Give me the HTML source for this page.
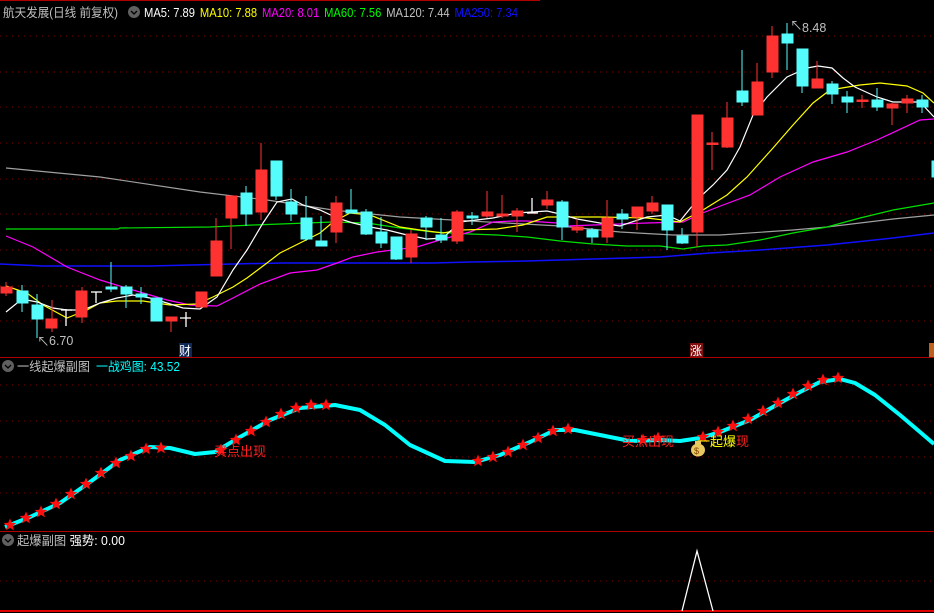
<!DOCTYPE html>
<html><head><meta charset="utf-8"><style>
body{margin:0;background:#000;width:934px;height:613px;overflow:hidden}
svg{display:block}
text{font-family:"Liberation Sans","Noto Sans CJK SC",sans-serif;font-size:12.5px}
</style></head><body>
<svg width="934" height="613" viewBox="0 0 934 613" xmlns="http://www.w3.org/2000/svg">
<rect width="934" height="613" fill="#000"/>
<line x1="0" y1="0.5" x2="540" y2="0.5" stroke="#b00000"/>
<g stroke="#800000" stroke-dasharray="1,5" stroke-width="1">
<line x1="0" y1="36" x2="934" y2="36"/><line x1="0" y1="72" x2="934" y2="72"/><line x1="0" y1="107" x2="934" y2="107"/><line x1="0" y1="143" x2="934" y2="143"/><line x1="0" y1="179" x2="934" y2="179"/><line x1="0" y1="214" x2="934" y2="214"/><line x1="0" y1="250" x2="934" y2="250"/><line x1="0" y1="286" x2="934" y2="286"/><line x1="0" y1="321" x2="934" y2="321"/>
<line x1="0" y1="385" x2="934" y2="385"/><line x1="0" y1="421" x2="934" y2="421"/><line x1="0" y1="457" x2="934" y2="457"/><line x1="0" y1="493" x2="934" y2="493"/>
<line x1="0" y1="581" x2="934" y2="581"/>
</g>
<line x1="0" y1="357.5" x2="934" y2="357.5" stroke="#b00000"/>
<line x1="0" y1="531.5" x2="934" y2="531.5" stroke="#b00000"/>
<line x1="0" y1="611" x2="934" y2="611" stroke="#e00000" stroke-width="2"/>

<!-- MA lines -->
<g fill="none" stroke-width="1.2">
<polyline stroke="#a0a0a0" points="6,168 100,177 200,192 267,200 333,210 400,217 470,221 560,226 620,232 673,235 720,235 793,230 827,227 893,219 934,215"/>
<polyline stroke="#1010ff" stroke-width="1.5" points="0,264 43,266 150,266 233,264 283,263 433,263 470,262 527,261 593,259 660,257 710,253 760,250 827,245 893,238 934,233"/>
<polyline stroke="#00e000" points="6,229 118,229 120,228 210,227 253,225 333,222 367,223 400,228 433,232 470,234 497,235 527,237 560,241 593,244 627,246 660,246 683,249 703,246 727,245 760,240 793,233 827,227 860,218 893,210 934,203"/>
<polyline stroke="#ff00ff" points="6,236 33,247 67,267 100,280 133,290 167,300 190,305 217,306 233,298 260,284 290,273 317,270 337,263 353,257 377,252 417,247 443,239 470,232 493,222 513,221 527,221 557,223 567,226 647,223 683,222 700,214 723,205 750,195 780,177 813,162 847,152 877,140 920,120 934,119"/>
<polyline stroke="#ffff00" points="6,286 27,293 43,305 67,318 87,310 100,303 117,301 143,301 170,305 197,304 213,297 233,287 247,278 267,263 280,253 300,243 320,233 333,222 350,213 370,215 400,227 420,230 443,233 460,230 497,229 523,225 547,217 600,217 647,218 680,222 703,210 727,195 747,177 773,148 793,125 813,103 830,90 860,85 880,83 907,86 923,93 934,103"/>
<polyline stroke="#ffffff" points="6,312 22,299 37,302 53,308 67,310 83,310 100,303 117,298 133,295 150,298 167,303 183,308 200,309 217,297 233,270 247,250 263,223 277,202 292,199 303,205 320,210 337,218 353,223 370,227 387,230 407,235 427,239 443,238 460,222 493,218 517,213 547,211 560,214 577,219 600,223 620,226 647,217 667,215 680,221 693,205 700,197 713,185 727,170 740,147 753,115 767,97 787,77 807,68 818,66 832,68 843,78 855,87 877,97 893,102 920,102 934,117"/>
</g>

<!-- red candles -->
<g stroke="#ff3232" fill="#ff3232">
<line x1="6" y1="282" x2="6" y2="296"/><rect x="1" y="287" width="11" height="6"/>
<line x1="52" y1="300" x2="52" y2="332"/><rect x="46" y="319" width="11" height="9"/>
<line x1="82" y1="287" x2="82" y2="323"/><rect x="76" y="291" width="11" height="26"/>
<line x1="171" y1="317" x2="171" y2="332"/><rect x="166" y="317" width="11" height="4"/>
<line x1="201" y1="292" x2="201" y2="307"/><rect x="196" y="292" width="11" height="15"/>
<line x1="216" y1="218" x2="216" y2="276"/><rect x="211" y="241" width="11" height="35"/>
<line x1="231" y1="196" x2="231" y2="249"/><rect x="226" y="196" width="11" height="22"/>
<line x1="261" y1="143" x2="261" y2="220"/><rect x="256" y="170" width="11" height="42"/>
<line x1="336" y1="196" x2="336" y2="243"/><rect x="331" y="203" width="11" height="29"/>
<line x1="411" y1="230" x2="411" y2="263"/><rect x="406" y="234" width="11" height="23"/>
<line x1="457" y1="210" x2="457" y2="244"/><rect x="452" y="212" width="11" height="29"/>
<line x1="487" y1="191" x2="487" y2="218"/><rect x="482" y="212" width="11" height="4"/>
<line x1="502" y1="195" x2="502" y2="218"/><rect x="497" y="214" width="11" height="2"/>
<line x1="517" y1="208" x2="517" y2="232"/><rect x="512" y="211" width="11" height="5"/>
<line x1="547" y1="191" x2="547" y2="209"/><rect x="542" y="200" width="11" height="5"/>
<line x1="577" y1="219" x2="577" y2="233"/><rect x="572" y="227" width="11" height="3"/>
<line x1="607" y1="200" x2="607" y2="243"/><rect x="602" y="218" width="11" height="19"/>
<line x1="637" y1="207" x2="637" y2="230"/><rect x="632" y="207" width="11" height="10"/>
<line x1="652" y1="196" x2="652" y2="214"/><rect x="647" y="203" width="11" height="8"/>
<line x1="697" y1="115" x2="697" y2="247"/><rect x="692" y="115" width="11" height="117"/>
<line x1="712" y1="132" x2="712" y2="170"/><rect x="707" y="143" width="11" height="1.5"/>
<line x1="727" y1="102" x2="727" y2="148"/><rect x="722" y="118" width="11" height="29"/>
<line x1="757" y1="63" x2="757" y2="115"/><rect x="752" y="82" width="11" height="33"/>
<line x1="772" y1="26" x2="772" y2="78"/><rect x="767" y="36" width="11" height="36"/>
<line x1="817" y1="61" x2="817" y2="88"/><rect x="812" y="79" width="11" height="9"/>
<line x1="862" y1="95" x2="862" y2="108"/><rect x="857" y="100" width="11" height="1.5"/>
<line x1="892" y1="103" x2="892" y2="125"/><rect x="887" y="104" width="11" height="4"/>
<line x1="907" y1="95" x2="907" y2="113"/><rect x="902" y="99" width="11" height="4"/>
</g>
<!-- cyan candles -->
<g stroke="#54fcfc" fill="#54fcfc">
<line x1="22" y1="285" x2="22" y2="312"/><rect x="17" y="291" width="11" height="12"/>
<line x1="37" y1="294" x2="37" y2="338"/><rect x="32" y="305" width="11" height="14"/>
<line x1="111" y1="262" x2="111" y2="292"/><rect x="106" y="287" width="11" height="2"/>
<line x1="126" y1="285" x2="126" y2="308"/><rect x="121" y="287" width="11" height="7"/>
<line x1="141" y1="287" x2="141" y2="304"/><rect x="136" y="294" width="11" height="3"/>
<line x1="156" y1="298" x2="156" y2="321"/><rect x="151" y="298" width="11" height="23"/>
<line x1="246" y1="186" x2="246" y2="226"/><rect x="241" y="193" width="11" height="21"/>
<line x1="276" y1="161" x2="276" y2="200"/><rect x="271" y="161" width="11" height="35"/>
<line x1="291" y1="189" x2="291" y2="221"/><rect x="286" y="202" width="11" height="12"/>
<line x1="306" y1="196" x2="306" y2="241"/><rect x="301" y="218" width="11" height="21"/>
<line x1="321" y1="216" x2="321" y2="246"/><rect x="316" y="241" width="11" height="5"/>
<line x1="351" y1="189" x2="351" y2="213"/><rect x="346" y="210" width="11" height="3"/>
<line x1="366" y1="209" x2="366" y2="235"/><rect x="361" y="212" width="11" height="22"/>
<line x1="381" y1="217" x2="381" y2="248"/><rect x="376" y="232" width="11" height="11"/>
<line x1="396" y1="237" x2="396" y2="260"/><rect x="391" y="237" width="11" height="22"/>
<line x1="426" y1="216" x2="426" y2="240"/><rect x="421" y="218" width="11" height="9"/>
<line x1="441" y1="218" x2="441" y2="243"/><rect x="436" y="235" width="11" height="5"/>
<line x1="472" y1="212" x2="472" y2="225"/><rect x="467" y="216" width="11" height="2"/>
<line x1="562" y1="200" x2="562" y2="240"/><rect x="557" y="202" width="11" height="25"/>
<line x1="592" y1="228" x2="592" y2="243"/><rect x="587" y="230" width="11" height="7"/>
<line x1="622" y1="209" x2="622" y2="229"/><rect x="617" y="214" width="11" height="5"/>
<line x1="667" y1="205" x2="667" y2="250"/><rect x="662" y="205" width="11" height="25"/>
<line x1="682" y1="228" x2="682" y2="244"/><rect x="677" y="236" width="11" height="7"/>
<line x1="742" y1="50" x2="742" y2="106"/><rect x="737" y="91" width="11" height="11"/>
<line x1="787" y1="23" x2="787" y2="70"/><rect x="782" y="34" width="11" height="9"/>
<line x1="802" y1="49" x2="802" y2="93"/><rect x="797" y="49" width="11" height="37"/>
<line x1="832" y1="81" x2="832" y2="104"/><rect x="827" y="84" width="11" height="10"/>
<line x1="847" y1="91" x2="847" y2="113"/><rect x="842" y="97" width="11" height="5"/>
<line x1="877" y1="88" x2="877" y2="111"/><rect x="872" y="100" width="11" height="7"/>
<line x1="922" y1="95" x2="922" y2="113"/><rect x="917" y="100" width="11" height="7"/>
<rect x="932" y="161" width="3" height="16"/>
</g>
<!-- white crosses -->
<g stroke="#ffffff" stroke-width="1.3">
<line x1="61" y1="310" x2="72" y2="310"/><line x1="66" y1="309" x2="66" y2="326"/>
<line x1="91" y1="292" x2="102" y2="292"/><line x1="96" y1="292" x2="96" y2="303"/>
<line x1="180" y1="318" x2="191" y2="318"/><line x1="186" y1="312" x2="186" y2="327"/>
<line x1="527" y1="213" x2="538" y2="213"/><line x1="532" y1="198" x2="532" y2="213"/>
</g>
<text x="37" y="346" fill="#c0c0c0" font-size="11">↖</text>
<text x="49" y="345" fill="#c0c0c0" style="font-size:12.5px">6.70</text>
<text x="790" y="30" fill="#c0c0c0" font-size="11">↖</text>
<text x="802" y="32" fill="#c0c0c0" style="font-size:12.5px">8.48</text>
<rect x="179" y="343" width="13" height="14" fill="#102858"/>
<text x="179" y="355" fill="#fff" style="font-size:12px">财</text>
<rect x="690" y="343" width="13" height="14" fill="#801010"/>
<text x="690" y="355" fill="#fff" style="font-size:12px">涨</text>
<rect x="929" y="343" width="5" height="14" fill="#c06020"/>

<!-- header -->
<text x="3" y="17" fill="#c0c0c0" style="font-size:12.5px" textLength="115" lengthAdjust="spacingAndGlyphs">航天发展(日线 前复权)</text>
<circle cx="134" cy="12" r="6" fill="#606060"/><path d="M131 11 L134 14 L137 11" stroke="#000" fill="none" stroke-width="1.3"/>
<text x="144" y="17" style="font-size:12.5px" textLength="374" lengthAdjust="spacingAndGlyphs"><tspan fill="#fff">MA5: 7.89 </tspan><tspan fill="#ffff00" dx="2">MA10: 7.88 </tspan><tspan fill="#ff00ff" dx="2">MA20: 8.01 </tspan><tspan fill="#00ff00" dx="2">MA60: 7.56 </tspan><tspan fill="#c0c0c0" dx="2">MA120: 7.44 </tspan><tspan fill="#1010ff" dx="2">MA250: 7.34</tspan></text>

<!-- panel 2 -->
<circle cx="8" cy="366" r="6" fill="#606060"/><path d="M5 365 L8 368 L11 365" stroke="#000" fill="none" stroke-width="1.3"/>
<text x="17" y="371" fill="#c0c0c0" style="font-size:12.5px" textLength="73" lengthAdjust="spacingAndGlyphs">一线起爆副图</text>
<text x="96" y="371" fill="#00ffff" style="font-size:12.5px" textLength="84" lengthAdjust="spacingAndGlyphs">一战鸡图: 43.52</text>
<polyline fill="none" stroke="#00ffff" stroke-width="4" stroke-linejoin="round" points="5,527 30,517 60,503 90,482 120,460 150,447 170,448 195,454 215,452 240,437 270,420 300,408 335,405 360,410 385,425 410,445 445,461 475,462 500,455 530,442 555,430 575,430 600,435 630,441 660,440 680,441 700,438 720,432 750,420 780,403 800,392 820,382 840,379 855,383 875,395 900,415 920,432 934,444"/>
<defs><path id="st" d="M0,-6.5 L1.8,-2.2 L6.3,-2 L2.8,0.9 L3.9,5.4 L0,2.8 L-3.9,5.4 L-2.8,0.9 L-6.3,-2 L-1.8,-2.2 Z" fill="#ff1010"/></defs>
<g>
<use href="#st" x="10" y="525"/><use href="#st" x="26" y="518"/><use href="#st" x="41" y="512"/><use href="#st" x="56" y="504"/><use href="#st" x="71" y="494"/><use href="#st" x="86" y="484"/><use href="#st" x="101" y="473"/><use href="#st" x="116" y="463"/><use href="#st" x="131" y="456"/><use href="#st" x="146" y="449"/><use href="#st" x="161" y="448"/>
<use href="#st" x="221" y="450"/><use href="#st" x="236" y="440"/><use href="#st" x="251" y="431"/><use href="#st" x="266" y="422"/><use href="#st" x="281" y="414"/><use href="#st" x="296" y="408"/><use href="#st" x="311" y="405"/><use href="#st" x="326" y="405"/>
<use href="#st" x="478" y="461"/><use href="#st" x="493" y="457"/><use href="#st" x="508" y="452"/><use href="#st" x="523" y="445"/><use href="#st" x="538" y="438"/><use href="#st" x="553" y="431"/><use href="#st" x="568" y="429"/>
<use href="#st" x="643" y="440"/><use href="#st" x="658" y="438"/><use href="#st" x="703" y="437"/><use href="#st" x="718" y="432"/><use href="#st" x="733" y="426"/><use href="#st" x="748" y="419"/><use href="#st" x="763" y="411"/><use href="#st" x="778" y="403"/><use href="#st" x="793" y="394"/><use href="#st" x="808" y="386"/><use href="#st" x="823" y="380"/><use href="#st" x="838" y="378"/>
</g>
<text x="214" y="456" fill="#ff2020" style="font-size:13px">买点出现</text>
<text x="622" y="446" fill="#ff2020" style="font-size:13px">买点出现</text>
<text x="697" y="446" style="font-size:13px"><tspan fill="#ffff00">一起爆</tspan><tspan fill="#ff2020">现</tspan></text>
<ellipse cx="698" cy="450" rx="7" ry="6.5" fill="#e8c860"/><rect x="695" y="441" width="6" height="3" fill="#e8c860"/>
<text x="694" y="454" fill="#804000" style="font-size:9px">$</text>

<!-- panel 3 -->
<circle cx="8" cy="540" r="6" fill="#606060"/><path d="M5 539 L8 542 L11 539" stroke="#000" fill="none" stroke-width="1.3"/>
<text x="17" y="545" fill="#c0c0c0" style="font-size:12.5px" textLength="108" lengthAdjust="spacingAndGlyphs">起爆副图 <tspan fill="#fff">强势: 0.00</tspan></text>
<polyline fill="none" stroke="#fff" stroke-width="1.3" points="682,611 697,551 713,611"/>
</svg>
</body></html>
